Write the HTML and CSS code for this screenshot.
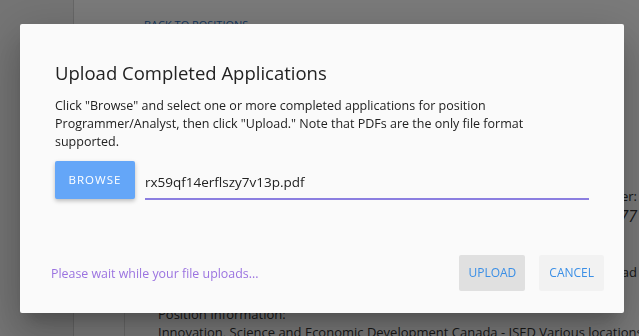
FILE: index.html
```html
<!DOCTYPE html>
<html lang="en">
<head>
  <meta charset="UTF-8" />
  <title>Upload Completed Applications</title>
  <link rel="stylesheet" href="styles.css">
</head>
<body>

<div class="page">
  <aside class="sidebar"></aside>
  <main class="main">
    <a href="#" class="back-link">BACK TO POSITIONS</a>
    <div class="card">
      <div class="card-row">
        <div class="card-left"></div>
        <div class="card-right">
          <p>Position Number:</p>
          <p class="num">24177</p>
          <p class="gap">Download</p>
        </div>
      </div>
      <div class="card-info">
        <p>Position Information:</p>
        <p>Innovation, Science and Economic Development Canada - ISED Various locations</p>
      </div>
    </div>
  </main>
</div>

<div class="overlay"></div>

<div class="dialog">
  <h2>Upload Completed Applications</h2>
  <p class="intro">Click "Browse" and select one or more completed applications for position Programmer/Analyst, then click "Upload." Note that PDFs are the only file format supported.</p>
  <div class="file-row">
    <a href="#" class="browse">BROWSE</a>
    <div class="file-field">rx59qf14erflszy7v13p.pdf</div>
  </div>
  <div class="actions">
    <span class="status">Please wait while your file uploads...</span>
    <a href="#" class="btn btn-upload">UPLOAD</a>
    <a href="#" class="btn btn-cancel">CANCEL</a>
  </div>
</div>

</body>
</html>
```
FILE: styles.css
```css
body {
  font-family: 'Open Sans', sans-serif;
  margin: 0;
  background-color: #fff;
  color: #333;
  overflow: hidden;
}
.page {
  display: flex;
  height: 336px;
}
.sidebar {
  flex-shrink: 0;
  width: 73px;
  background-color: #f2f2f2;
  border-right: 1px solid #d6d6d6;
}
.main {
  flex: 1;
  min-width: 0;
  padding: 17px 2px 0 70px;
  white-space: nowrap;
}
.back-link {
  display: block;
  color: #2a6fc0;
  font-size: 11px;
  text-decoration: none;
  margin-bottom: 154px;
}
.card {
  margin-left: -20px;
  border-left: 1px solid #ddd;
  padding-left: 33px;
}
.card p {
  margin: 0;
  font-size: 13px;
}
.card-row {
  display: flex;
  height: 119px;
}
.card-left {
  flex: 1;
}
.card-right {
  text-align: right;
}
.card-right p {
  line-height: 20px;
}
.card-right .num {
  font-size: 16px;
  font-style: italic;
}
.card-right .gap {
  margin-top: 36px;
}
.card-info p {
  line-height: 18px;
}
.overlay {
  position: fixed;
  inset: 0;
  background-color: rgba(0, 0, 0, 0.52);
}
.dialog {
  position: fixed;
  left: 20px;
  top: 24px;
  width: 604px;
  height: 289px;
  box-sizing: border-box;
  background-color: #fafafa;
  border-radius: 2px;
  box-shadow: 0 11px 15px -7px rgba(0,0,0,0.2), 0 24px 38px 3px rgba(0,0,0,0.14), 0 9px 46px 8px rgba(0,0,0,0.12);
  padding: 36px 35px 0 35px;
  color: #222;
}
.dialog h2 {
  font-weight: 400;
  font-size: 18.5px;
  margin: 0 0 11px;
  line-height: 26px;
}
.intro {
  font-size: 12.5px;
  line-height: 18px;
  margin: 0 0 10px;
  width: 520px;
}
.file-row {
  display: flex;
  align-items: flex-end;
  gap: 10px;
}
.browse {
  display: inline-block;
  width: 80px;
  height: 38px;
  line-height: 38px;
  text-align: center;
  background-color: #64a6f8;
  color: #fff;
  font-size: 11.5px;
  letter-spacing: 1px;
  text-decoration: none;
  border-radius: 2px;
  box-shadow: 0 2px 4px rgba(0,0,0,0.25);
}
.file-field {
  flex: 1;
  font-size: 13.5px;
  padding-bottom: 7px;
  border-bottom: 2px solid #8b7ee0;
  margin-bottom: -1px;
}
.actions {
  display: flex;
  align-items: center;
  margin: 56px -15px 0 -4px;
  gap: 14px;
}
.status {
  flex: 1;
  color: #9b73e0;
  font-size: 12.4px;
}
.btn {
  display: inline-block;
  height: 36px;
  line-height: 36px;
  padding: 0 9px;
  color: #3b8fe6;
  font-size: 12px;
  text-decoration: none;
  border-radius: 2px;
}
.btn-upload {
  background-color: #e0e0e0;
}
.btn-cancel {
  padding: 0 10px;
  background-color: #f2f2f2;
}
```
